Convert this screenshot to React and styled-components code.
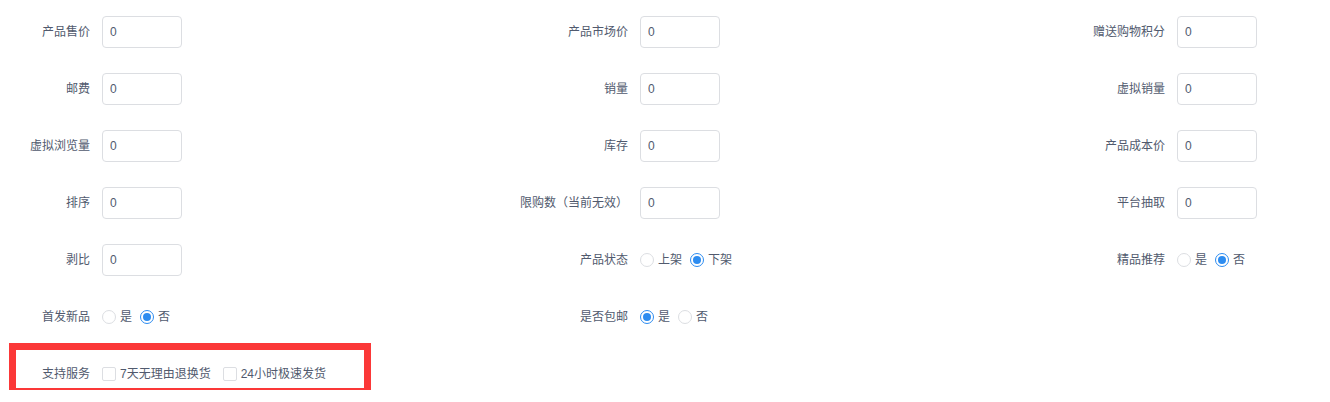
import React, { useState } from 'react';
import styled, { createGlobalStyle } from 'styled-components';

const GlobalStyle = createGlobalStyle`
	html, body {
		margin: 0;
		padding: 0;
		background: #fff;
	}
	body {
		font-family: "Liberation Sans", "Noto Sans CJK SC", sans-serif;
		font-size: 12px;
		color: #515a6e;
	}
`;

const fields = [
	{ label: '产品售价', type: 'input', value: '0' },
	{ label: '产品市场价', type: 'input', value: '0' },
	{ label: '赠送购物积分', type: 'input', value: '0' },
	{ label: '邮费', type: 'input', value: '0' },
	{ label: '销量', type: 'input', value: '0' },
	{ label: '虚拟销量', type: 'input', value: '0' },
	{ label: '虚拟浏览量', type: 'input', value: '0' },
	{ label: '库存', type: 'input', value: '0' },
	{ label: '产品成本价', type: 'input', value: '0' },
	{ label: '排序', type: 'input', value: '0' },
	{ label: '限购数（当前无效）', type: 'input', value: '0' },
	{ label: '平台抽取', type: 'input', value: '0' },
	{ label: '剥比', type: 'input', value: '0' },
	{ label: '产品状态', type: 'radio', options: ['上架', '下架'], value: '下架' },
	{ label: '精品推荐', type: 'radio', options: ['是', '否'], value: '否' },
	{ label: '首发新品', type: 'radio', options: ['是', '否'], value: '否' },
	{ label: '是否包邮', type: 'radio', options: ['是', '否'], value: '是' },
	{ label: '', type: 'empty' },
	{ label: '支持服务', type: 'checkbox', options: ['7天无理由退换货', '24小时极速发货'], highlight: true },
];

function App() {
	return (
		<>
			<GlobalStyle />
			<FormGrid>
				{fields.map((field, i) => (
					<FormItem key={i} highlight={field.highlight}>
						{field.type !== 'empty' && <Label><span>{field.label}</span></Label>}
						<Control>
							{field.type === 'input' && <TextInput defaultValue={field.value} />}
							{field.type === 'radio' && <RadioGroup options={field.options} initial={field.value} />}
							{field.type === 'checkbox' && <CheckGroup options={field.options} />}
						</Control>
					</FormItem>
				))}
			</FormGrid>
		</>
	);
}

function RadioGroup({ options, initial }) {
	const [value, setValue] = useState(initial);
	return (
		<>
			{options.map(opt => (
				<OptionLabel key={opt} onClick={() => setValue(opt)}>
					<RadioDot checked={value === opt} />
					<span>{opt}</span>
				</OptionLabel>
			))}
		</>
	);
}

function CheckGroup({ options }) {
	const [checked, setChecked] = useState({});
	return (
		<>
			{options.map(opt => (
				<OptionLabel key={opt} wide onClick={() => setChecked({ ...checked, [opt]: !checked[opt] })}>
					<CheckBox checked={!!checked[opt]} />
					<span>{opt}</span>
				</OptionLabel>
			))}
		</>
	);
}

const FormGrid = styled.div`
	display: grid;
	grid-template-columns: 538px 537px 1fr;
	row-gap: 25px;
	padding-top: 16px;
`;

const FormItem = styled.div`
	position: relative;
	display: flex;
	align-items: center;
	height: 32px;
	${({ highlight }) => highlight && `
		&::after {
			content: '';
			position: absolute;
			left: 9px;
			top: -15px;
			bottom: -5px;
			width: 362px;
			box-sizing: border-box;
			border: 7px solid #fb3838;
			pointer-events: none;
		}
	`}
`;

const Label = styled.label`
	display: flex;
	justify-content: flex-end;
	flex: 0 0 102px;
	width: 102px;
	min-width: 0;
	box-sizing: border-box;
	padding-right: 12px;
	font-size: 12px;
	line-height: 1;
	color: #515a6e;
	white-space: nowrap;
	& > span {
		flex-shrink: 0;
	}
`;

const Control = styled.div`
	display: flex;
	align-items: center;
`;

const TextInput = styled.input`
	width: 80px;
	height: 32px;
	box-sizing: border-box;
	padding: 4px 7px;
	border: 1px solid #dcdee2;
	border-radius: 4px;
	font-family: "Liberation Sans", "Noto Sans CJK SC", sans-serif;
	font-size: 12px;
	color: #515a6e;
	outline: none;
	background: #fff;
`;

const OptionLabel = styled.label`
	display: inline-flex;
	align-items: center;
	gap: 4px;
	margin-right: ${({ wide }) => (wide ? '12px' : '8px')};
	font-size: 12px;
	line-height: 1;
	color: #515a6e;
	cursor: pointer;
	white-space: nowrap;
`;

const RadioDot = styled.span`
	position: relative;
	display: inline-block;
	width: 14px;
	height: 14px;
	box-sizing: border-box;
	border: 1px solid ${({ checked }) => (checked ? '#2d8cf0' : '#dcdee2')};
	border-radius: 50%;
	background: #fff;
	&::after {
		content: '';
		position: absolute;
		left: 2px;
		top: 2px;
		width: 8px;
		height: 8px;
		border-radius: 50%;
		background: #2d8cf0;
		opacity: ${({ checked }) => (checked ? 1 : 0)};
	}
`;

const CheckBox = styled.span`
	display: inline-block;
	width: 14px;
	height: 14px;
	box-sizing: border-box;
	border: 1px solid ${({ checked }) => (checked ? '#2d8cf0' : '#dcdee2')};
	border-radius: 2px;
	background: ${({ checked }) => (checked ? '#2d8cf0' : '#fff')};
`;

export default App;
